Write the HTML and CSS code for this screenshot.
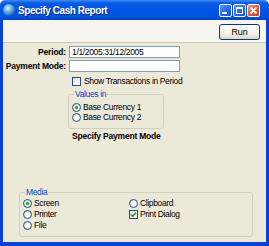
FILE: index.html
```html
<!DOCTYPE html>
<html lang="en">
  <head>
    <meta charset="UTF-8">
    <title>Specify Cash Report</title>
    <link rel="stylesheet" href="styles.css">
  </head>
  <body>
    <div class="window">
      <div class="titlebar">
        <span class="app-icon"></span>
        <span class="title">Specify Cash Report</span>
        <div class="caption-buttons">
          <span class="cap-btn">
            <svg width="13" height="13" viewBox="0 0 13 13"><rect x="3" y="8" width="5" height="2" fill="#fff"/></svg>
          </span>
          <span class="cap-btn">
            <svg width="13" height="13" viewBox="0 0 13 13"><rect x="3.5" y="3.5" width="6" height="6" fill="none" stroke="#fff" stroke-width="1"/><rect x="3" y="3" width="7" height="2" fill="#fff"/></svg>
          </span>
          <span class="cap-btn close">
            <svg width="13" height="13" viewBox="0 0 13 13"><path d="M3.5 3.5 L9.5 9.5 M9.5 3.5 L3.5 9.5" stroke="#fff" stroke-width="1.8"/></svg>
          </span>
        </div>
      </div>

      <div class="frame">
        <div class="toolbar">
          <button class="run">Run</button>
        </div>

        <div class="content">
          <div class="form">
            <label>Period:</label>
            <div class="field">1/1/2005:31/12/2005</div>
            <label>Payment Mode:</label>
            <div class="field"></div>
          </div>

          <div class="check-row">
            <span class="checkbox"></span>
            <span>Show Transactions in Period</span>
          </div>

          <fieldset class="group values">
            <legend>Values in</legend>
            <div class="option"><span class="radio checked"></span>Base Currency 1</div>
            <div class="option"><span class="radio"></span>Base Currency 2</div>
          </fieldset>

          <div class="section-title">Specify Payment Mode</div>

          <fieldset class="group media">
            <legend>Media</legend>
            <div class="media-grid">
              <div class="option"><span class="radio checked"></span>Screen</div>
              <div class="option"><span class="radio"></span>Clipboard</div>
              <div class="option"><span class="radio"></span>Printer</div>
              <div class="option">
                <span class="checkbox">
                  <svg width="7" height="7" viewBox="0 0 7 7"><path d="M1 3.5 L2.8 5.3 L6 1.5" fill="none" stroke="#21a121" stroke-width="1.6"/></svg>
                </span>Print Dialog
              </div>
              <div class="option"><span class="radio"></span>File</div>
            </div>
          </fieldset>
        </div>
      </div>
    </div>
  </body>
</html>
```

FILE: styles.css
```css
* {
  box-sizing: border-box;
}

body {
  margin: 0;
  font-family: "Liberation Sans", Arial, sans-serif;
  font-size: 8.5px;
  letter-spacing: -0.35px;
  color: #000;
}

.window {
  width: 269px;
  height: 246px;
  display: flex;
  flex-direction: column;
}

.titlebar {
  height: 20px;
  display: flex;
  align-items: center;
  padding: 0 0 0 3px;
  background: linear-gradient(#3d8ef7 0%, #0a5ae6 15%, #0055e5 50%, #0052dd 85%, #003ec0 100%);
  border-radius: 5px 5px 0 0;
}

.app-icon {
  width: 12px;
  height: 12px;
  border-radius: 50%;
  background: radial-gradient(circle at 40% 35%, #d8f0ff 0%, #5aa8e8 40%, #1a5fb0 75%, #0b3f86 100%);
  margin-right: 3px;
}

.title {
  color: #fff;
  font-weight: bold;
  font-size: 10px;
  letter-spacing: -0.45px;
  text-shadow: 1px 1px 0 #0a2a8a;
}

.caption-buttons {
  margin-left: auto;
  margin-right: 9px;
  display: flex;
  gap: 1px;
}

.cap-btn {
  width: 13px;
  height: 13px;
  display: block;
  border: 1px solid #fff;
  border-radius: 2px;
  background: linear-gradient(135deg, #5a96f8 0%, #2a6ef0 50%, #1450d8 100%);
}

.cap-btn svg {
  display: block;
  margin: -1px;
}

.cap-btn.close {
  background: linear-gradient(135deg, #f0a080 0%, #e05a30 50%, #c8401c 100%);
}

.frame {
  flex: 1;
  display: flex;
  flex-direction: column;
  border-left: 3px solid #0841d4;
  border-right: 3px solid #0841d4;
  border-bottom: 4px solid #0841d4;
  background: #ece9d8;
}

.toolbar {
  height: 23px;
  display: flex;
  justify-content: flex-end;
  align-items: center;
  padding-right: 6px;
  background: #f6f5f0;
  border-bottom: 1px solid #c9c6b6;
}

.run {
  width: 41px;
  height: 16px;
  margin-top: 2px;
  padding: 0;
  font-family: inherit;
  font-size: 9px;
  letter-spacing: -0.2px;
  color: #000;
  border: 1px solid #003c74;
  border-radius: 3px;
  background: linear-gradient(#ffffff 0%, #f4f3ee 60%, #dcd8c8 100%);
}

.content {
  flex: 1;
  display: flex;
  flex-direction: column;
  padding-bottom: 5px;
}

.form {
  display: grid;
  grid-template-columns: 63px 111px;
  column-gap: 3px;
  row-gap: 2px;
  margin-top: 3px;
}

.form label {
  text-align: right;
  font-weight: bold;
  letter-spacing: -0.2px;
  white-space: nowrap;
  line-height: 12px;
}

.field {
  height: 12px;
  line-height: 10px;
  padding: 0 2px;
  background: #fff;
  border: 1px solid #7f9db9;
}

.check-row {
  display: flex;
  align-items: center;
  gap: 3px;
  margin: 4px 0 0 69px;
  height: 10px;
}

.checkbox {
  width: 9px;
  height: 9px;
  flex: none;
  display: flex;
  align-items: center;
  justify-content: center;
  border: 1px solid #1c5180;
  background: linear-gradient(135deg, #dcdad0 0%, #f5f5f1 60%, #fff 100%);
}

.group {
  margin: 0;
  border: 1px solid #d0d0bf;
  border-radius: 3px;
}

.group legend {
  color: #0046d5;
  padding: 0 1px;
  line-height: 9px;
  margin-left: 2px;
}

.values {
  width: 96px;
  margin: 4px 0 0 65px;
  padding: 3px 0 6px 3px;
}

.option {
  display: flex;
  align-items: center;
  gap: 2px;
  height: 10px;
}

.radio {
  width: 9px;
  height: 9px;
  flex: none;
  border: 1px solid #1c5180;
  border-radius: 50%;
  background: radial-gradient(circle at 65% 65%, #fff 0%, #f2f1ea 50%, #d6d3c4 100%);
  display: flex;
  align-items: center;
  justify-content: center;
}

.radio.checked::after {
  content: "";
  width: 3px;
  height: 3px;
  border-radius: 50%;
  background: #21a121;
  box-shadow: 0 0 1px #5fd25f;
}

.section-title {
  font-weight: bold;
  letter-spacing: -0.2px;
  margin: 2px 0 0 69px;
  line-height: 11px;
}

.media {
  margin: auto 0 0 16px;
  width: 234px;
  padding: 1px 0 5px 3px;
}

.media-grid {
  display: grid;
  grid-template-columns: 106px 1fr;
  grid-auto-rows: 11px;
}
```
